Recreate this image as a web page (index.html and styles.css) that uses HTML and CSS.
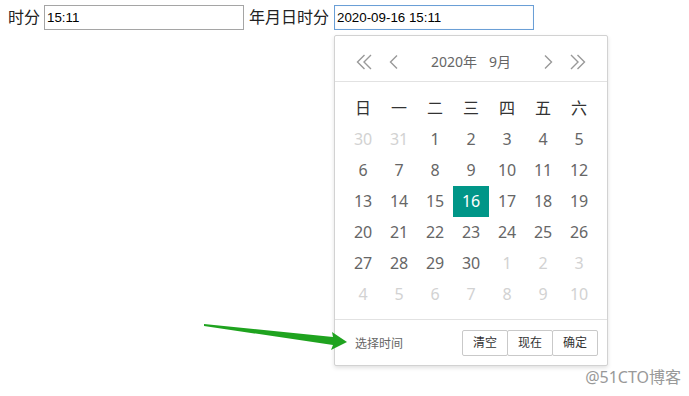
FILE: index.html
```html
<!DOCTYPE HTML>
<html>
<head>
    <title>laydate</title>
    <meta charset="UTF-8">
    <link rel="stylesheet" href="styles.css">
</head>
<body>
    <div class="form-row">
        <span class="label">时分</span>
        <input class="field" type="text" value="15:11">
        <span class="label label-wide">年月日时分</span>
        <div class="picker">
            <input class="field field-focus" type="text" value="2020-09-16 15:11">
            <div class="laydate">
                <div class="laydate-header">
                    <span class="nav">
                        <svg viewBox="0 0 18 18" width="18" height="18"><path d="M9.5 2 L2.5 9 L9.5 16 M16 2 L9 9 L16 16" fill="none" stroke="#999" stroke-width="1.4"/></svg>
                    </span>
                    <span class="nav">
                        <svg viewBox="0 0 18 18" width="18" height="18"><path d="M12 2.5 L5.5 9 L12 15.5" fill="none" stroke="#999" stroke-width="1.4"/></svg>
                    </span>
                    <div class="ym"><span>2020年</span><span>9月</span></div>
                    <span class="nav">
                        <svg viewBox="0 0 18 18" width="18" height="18"><path d="M6 2.5 L12.5 9 L6 15.5" fill="none" stroke="#999" stroke-width="1.4"/></svg>
                    </span>
                    <span class="nav">
                        <svg viewBox="0 0 18 18" width="18" height="18"><path d="M2 2 L9 9 L2 16 M8.5 2 L15.5 9 L8.5 16" fill="none" stroke="#999" stroke-width="1.4"/></svg>
                    </span>
                </div>
                <div class="laydate-content">
                    <div class="week">
                        <span>日</span><span>一</span><span>二</span><span>三</span><span>四</span><span>五</span><span>六</span>
                    </div>
                    <div class="days">
                        <span class="other">30</span><span class="other">31</span><span>1</span><span>2</span><span>3</span><span>4</span><span>5</span>
                        <span>6</span><span>7</span><span>8</span><span>9</span><span>10</span><span>11</span><span>12</span>
                        <span>13</span><span>14</span><span>15</span><span class="this">16</span><span>17</span><span>18</span><span>19</span>
                        <span>20</span><span>21</span><span>22</span><span>23</span><span>24</span><span>25</span><span>26</span>
                        <span>27</span><span>28</span><span>29</span><span>30</span><span class="other">1</span><span class="other">2</span><span class="other">3</span>
                        <span class="other">4</span><span class="other">5</span><span class="other">6</span><span class="other">7</span><span class="other">8</span><span class="other">9</span><span class="other">10</span>
                    </div>
                </div>
                <div class="laydate-footer">
                    <span class="time-btn">选择时间</span>
                    <div class="btns">
                        <span>清空</span><span>现在</span><span>确定</span>
                    </div>
                </div>
            </div>
        </div>
    </div>

    <svg class="arrow" width="150" height="36" viewBox="200 318 150 36">
        <polygon points="204,324 333,337 332,332 347,342 331,350 333,345 204,326" fill="#1fa31f"/>
    </svg>

    <div class="watermark">@51CTO博客</div>
</body>
</html>
```

FILE: styles.css
```css
html, body{
    height: 100%;
}

body{
    margin: 0;
    padding: 5px 8px;
    box-sizing: border-box;
    font-family: "Noto Sans", "Noto Sans CJK SC", sans-serif;
    color: #222;
}

.form-row{
    display: flex;
    align-items: flex-start;
}

.label{
    font-size: 16px;
    line-height: 25px;
    margin-right: 4px;
}

.label-wide{
    margin-left: 5px;
    margin-right: 5px;
}

.field{
    box-sizing: border-box;
    width: 200px;
    height: 25px;
    margin: 0;
    padding: 0 2px;
    border: 1px solid #a5a5a5;
    font: 13.33px "Liberation Sans", Arial, sans-serif;
    color: #000;
    outline: none;
}

.field-focus{
    border-color: #6a9fd6;
    box-shadow: inset 0 0 1px #cfe0f3;
}

.picker{
    position: relative;
    width: 200px;
}

.laydate{
    position: absolute;
    z-index: 2;
    top: 30px;
    left: 0;
    width: 274px;
    box-sizing: border-box;
    border: 1px solid #d2d2d2;
    border-radius: 2px;
    background: #fff;
    box-shadow: 0 2px 4px rgba(0, 0, 0, .12);
    color: #666;
    font-size: 14px;
}

.laydate-header{
    display: flex;
    align-items: center;
    height: 46px;
    padding: 11px 20px 4px;
    box-sizing: border-box;
    border-bottom: 1px solid #e2e2e2;
}

.nav{
    display: flex;
    width: 18px;
    height: 30px;
    align-items: center;
}

.nav + .nav{
    margin-left: 12px;
}

.ym{
    flex: 1;
    text-align: center;
    line-height: 30px;
}

.ym span + span{
    margin-left: 12px;
}

.laydate-content{
    padding: 11px 10px 9px;
}

.week, .days{
    display: grid;
    grid-template-columns: repeat(7, 36px);
    grid-auto-rows: 31px;
    font-size: 16px;
    text-align: center;
    line-height: 31px;
}

.week{
    color: #333;
}

.days .other{
    color: #d2d2d2;
}

.days .this{
    background: #009688;
    color: #fff;
}

.laydate-footer{
    display: flex;
    justify-content: space-between;
    align-items: center;
    height: 45px;
    padding: 0 9px 0 20px;
    border-top: 1px solid #e2e2e2;
    font-size: 12px;
}

.time-btn{
    color: #666;
}

.btns{
    display: flex;
}

.btns span{
    height: 26px;
    line-height: 24px;
    padding: 0 10px;
    margin-left: -1px;
    box-sizing: border-box;
    border: 1px solid #c9c9c9;
    border-radius: 2px;
    background: #fff;
    color: #333;
}

.arrow{
    position: absolute;
    z-index: 3;
    left: 200px;
    top: 318px;
}

.watermark{
    position: absolute;
    right: 8px;
    bottom: 8px;
    font-size: 16px;
    color: #999;
}
```
